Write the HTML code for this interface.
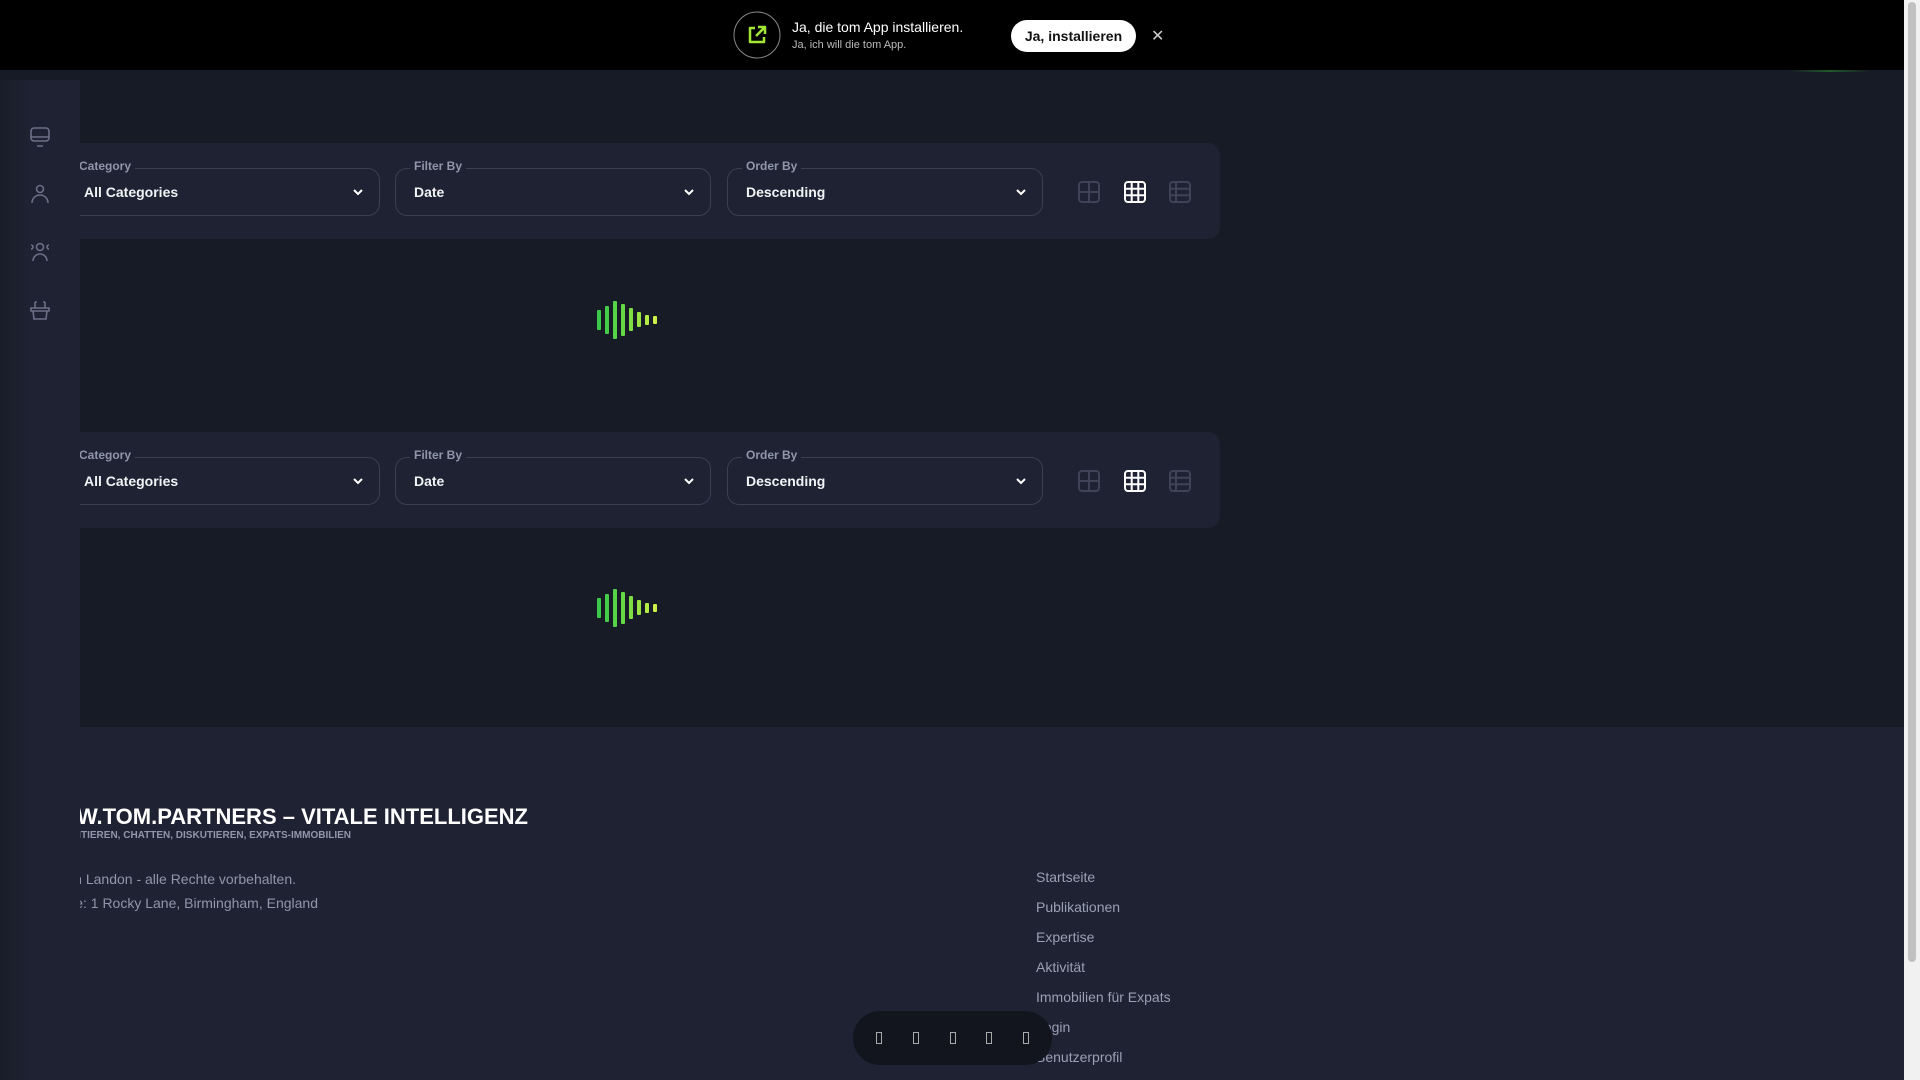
<!DOCTYPE html>
<html><head><meta charset="utf-8"><style>
*{box-sizing:border-box;margin:0;padding:0}
body{width:1920px;height:1080px;overflow:hidden;background:#171b26;font-family:"Liberation Sans",sans-serif;position:relative}
.top{position:absolute;left:0;top:0;width:1904px;height:70px;background:#000}
.scroll{position:absolute;right:0;top:0;width:16px;height:1080px;background:#f1f1f1}
.scroll i{position:absolute;left:4px;top:2px;width:8px;height:960px;background:#c1c1c1;border-radius:4px}
.side{position:absolute;left:0;top:80px;width:80px;height:1000px;background:linear-gradient(90deg,#1a1e2a 0,#1e2232 40%);z-index:5}
.side svg{position:absolute;left:28px}
.panel{position:absolute;left:80px;width:1140px;height:96px;background:#1e2232;border-radius:0 12px 12px 0}
.sel{position:absolute;top:25px;height:48px;border:1px solid #3a3f52;border-radius:12px}
.sel b{position:absolute;left:18px;top:15px;color:#f2f3f6;font-size:14px}
.sel span{position:absolute;top:-10px;left:14px;background:#1e2232;padding:0 4px;color:#9096ab;font-size:12px;font-weight:bold}
.sel svg{position:absolute;right:16px;top:19px}
.vi{position:absolute;top:38px}
.load{position:absolute;width:60px;height:40px}
.load i{position:absolute;width:4px;border-radius:1px}
.foot{position:absolute;left:0;top:727px;width:1904px;height:353px;background:#1e2232}
.ft{position:absolute;color:#fff;white-space:nowrap}
.links{position:absolute;left:1036px;top:867px}
.links div{color:#9aa0b4;font-size:14px;height:30px;line-height:20px}
.pill{position:absolute;left:853px;top:1011px;width:199px;height:54px;background:#12151d;border-radius:27px}
.pill i{position:absolute;top:21px;width:6px;height:12px;border:1px solid #aaa}
</style></head><body>
<div class="top">
 <svg style="position:absolute;left:733px;top:11px" width="48" height="48"><circle cx="24" cy="24" r="23" fill="none" stroke="#888" stroke-width="1"/><path d="M22 17h-5v14h14v-5M25 16h7v7M32 16l-9 9" fill="none" stroke="#a3e635" stroke-width="2.5" stroke-linejoin="round"/></svg>
 <div style="position:absolute;left:792px;top:19px;color:#fff;font-size:14px">Ja, die tom App installieren.</div>
 <div style="position:absolute;left:792px;top:39px;color:#bbb;font-size:11px">Ja, ich will die tom App.</div>
 <div style="position:absolute;left:1011px;top:20px;width:125px;height:32px;background:#fff;border-radius:16px;font-weight:bold;font-size:14px;line-height:32px;text-align:center;color:#111">Ja, installieren</div>
 <div style="position:absolute;left:1151px;top:26px;color:#ccc;font-size:16px">✕</div>
</div>
<div style="position:absolute;left:1790px;top:70px;width:80px;height:2px;background:linear-gradient(90deg,transparent,#1f5a2a,transparent)"></div>
<div class="scroll"><i></i></div>
<div class="side">
 <svg style="top:45px" width="24" height="24" fill="none" stroke="#6b7088" stroke-width="1.6"><rect x="3" y="3" width="18" height="13" rx="3"/><path d="M3 12h18M9 21h6"/></svg>
 <svg style="top:102px" width="24" height="24" fill="none" stroke="#6b7088" stroke-width="1.6"><circle cx="12" cy="7" r="3.5"/><path d="M4 21a8 8 0 0 1 16 0"/></svg>
 <svg style="top:160px" width="24" height="24" fill="none" stroke="#6b7088" stroke-width="1.6"><circle cx="12" cy="7" r="3.5"/><path d="M5 21a7 7 0 0 1 14 0M3 5a2 2 0 0 1 0 4M21 5a2 2 0 0 0 0 4"/></svg>
 <svg style="top:218px" width="24" height="24" fill="none" stroke="#6b7088" stroke-width="1.6"><path d="M3 10h18v3H3zM5 13l1 8h12l1-8M7 10V4M17 10V4M7 4h2M15 4h2"/></svg>
</div>

<div class="panel" style="top:143px">
 <div class="sel" style="left:-20px;width:320px"><span>Category</span><b style="left:23px">All Categories</b><svg width="10" height="8"><path d="M1 2l4 4 4-4" stroke="#fff" stroke-width="2" fill="none"/></svg></div>
 <div class="sel" style="left:315px;width:316px"><span>Filter By</span><b>Date</b><svg width="10" height="8"><path d="M1 2l4 4 4-4" stroke="#fff" stroke-width="2" fill="none"/></svg></div>
 <div class="sel" style="left:647px;width:316px"><span>Order By</span><b>Descending</b><svg width="10" height="8"><path d="M1 2l4 4 4-4" stroke="#fff" stroke-width="2" fill="none"/></svg></div>
 <svg class="vi" style="left:998px" width="22" height="22" fill="none" stroke="#3e4357" stroke-width="2"><rect x="1" y="1" width="20" height="20" rx="3"/><path d="M11 1v20M1 11h20"/></svg>
 <svg class="vi" style="left:1044px" width="22" height="22" fill="none" stroke="#fff" stroke-width="2"><rect x="1" y="1" width="20" height="20" rx="3"/><path d="M7.7 1v20M14.3 1v20M1 7.7h20M1 14.3h20"/></svg>
 <svg class="vi" style="left:1089px" width="22" height="22" fill="none" stroke="#3e4357" stroke-width="2"><rect x="1" y="1" width="20" height="20" rx="3"/><path d="M7 1v20M1 7.7h20M1 14.3h20"/></svg>
</div>
<div class="panel" style="top:432px">
 <div class="sel" style="left:-20px;width:320px"><span>Category</span><b style="left:23px">All Categories</b><svg width="10" height="8"><path d="M1 2l4 4 4-4" stroke="#fff" stroke-width="2" fill="none"/></svg></div>
 <div class="sel" style="left:315px;width:316px"><span>Filter By</span><b>Date</b><svg width="10" height="8"><path d="M1 2l4 4 4-4" stroke="#fff" stroke-width="2" fill="none"/></svg></div>
 <div class="sel" style="left:647px;width:316px"><span>Order By</span><b>Descending</b><svg width="10" height="8"><path d="M1 2l4 4 4-4" stroke="#fff" stroke-width="2" fill="none"/></svg></div>
 <svg class="vi" style="left:998px" width="22" height="22" fill="none" stroke="#3e4357" stroke-width="2"><rect x="1" y="1" width="20" height="20" rx="3"/><path d="M11 1v20M1 11h20"/></svg>
 <svg class="vi" style="left:1044px" width="22" height="22" fill="none" stroke="#fff" stroke-width="2"><rect x="1" y="1" width="20" height="20" rx="3"/><path d="M7.7 1v20M14.3 1v20M1 7.7h20M1 14.3h20"/></svg>
 <svg class="vi" style="left:1089px" width="22" height="22" fill="none" stroke="#3e4357" stroke-width="2"><rect x="1" y="1" width="20" height="20" rx="3"/><path d="M7 1v20M1 7.7h20M1 14.3h20"/></svg>
</div>

<div class="load" style="left:597px;top:300px">
 <i style="left:0;top:10px;height:20px;background:#3bc94a"></i><i style="left:8px;top:6px;height:28px;background:#44cc48"></i><i style="left:16px;top:1px;height:38px;background:#55d447"></i><i style="left:24px;top:4px;height:32px;background:#66d845"></i><i style="left:32px;top:8px;height:23px;background:#80de44"></i><i style="left:40px;top:12px;height:15px;background:#9ae443"></i><i style="left:48px;top:15px;height:10px;background:#b4ea45"></i><i style="left:56px;top:16px;height:8px;background:#cdf04a"></i>
</div>
<div class="load" style="left:597px;top:588px">
 <i style="left:0;top:10px;height:20px;background:#3bc94a"></i><i style="left:8px;top:6px;height:28px;background:#44cc48"></i><i style="left:16px;top:1px;height:38px;background:#55d447"></i><i style="left:24px;top:4px;height:32px;background:#66d845"></i><i style="left:32px;top:8px;height:23px;background:#80de44"></i><i style="left:40px;top:12px;height:15px;background:#9ae443"></i><i style="left:48px;top:15px;height:10px;background:#b4ea45"></i><i style="left:56px;top:16px;height:8px;background:#cdf04a"></i>
</div>

<div class="foot"></div>
<div class="ft" style="right:1392px;top:804px;font-size:22px;font-weight:bold">WWW.TOM.PARTNERS – VITALE INTELLIGENZ</div>
<div class="ft" style="right:1569px;top:830px;font-size:10px;font-weight:bold;color:#9096ab">LESEN, KOMMENTIEREN, CHATTEN, DISKUTIEREN, EXPATS-IMMOBILIEN</div>
<div class="ft" style="right:1624px;top:871px;font-size:14px;color:#9096ab">© 2024 John Landon - alle Rechte vorbehalten.</div>
<div class="ft" style="right:1602px;top:895px;font-size:14px;color:#9096ab">Adresse: 1 Rocky Lane, Birmingham, England</div>
<div class="links"><div>Startseite</div><div>Publikationen</div><div>Expertise</div><div>Aktivität</div><div>Immobilien für Expats</div><div>Login</div><div>Benutzerprofil</div></div>
<div class="pill"><i style="left:23px"></i><i style="left:60px"></i><i style="left:97px"></i><i style="left:133px"></i><i style="left:170px"></i></div>
</body></html>
